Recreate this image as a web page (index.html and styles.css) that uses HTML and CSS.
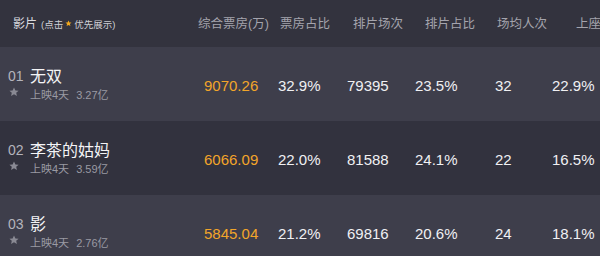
FILE: index.html
```html
<!DOCTYPE html>
<html lang="zh-CN">
<head>
<meta charset="utf-8">
<link rel="stylesheet" href="styles.css">
</head>
<body>
<div class="board">
  <div class="head">
    <div class="h-film"><span class="h-title">影片</span><span class="h-hint">(点击<svg class="h-star" viewBox="0 0 10 10"><path d="M5 0.6l1.3 2.8 3 .3-2.3 2 .7 3-2.7-1.6-2.7 1.6.7-3-2.3-2 3-.3z" fill="#f2a81d"/></svg>优先展示)</span></div>
    <div class="h-col h1">综合票房(万)</div>
    <div class="h-col h2">票房占比</div>
    <div class="h-col h3">排片场次</div>
    <div class="h-col h4">排片占比</div>
    <div class="h-col h5">场均人次</div>
    <div class="h-col h6">上座率</div>
  </div>

  <div class="row odd">
    <div class="film">
      <div class="rank"><span class="num">01</span><svg class="star" viewBox="0 0 10 10"><path d="M5 0.4l1.4 3 3.2.3-2.4 2.1.7 3.2L5 7.3 2.1 9l.7-3.2L.4 3.7l3.2-.3z" fill="#8a8a94"/></svg></div>
      <div class="info"><div class="name">无双</div><div class="meta">上映4天<span class="sum">3.27亿</span></div></div>
    </div>
    <div class="v c1 gold">9070.26</div>
    <div class="v c2">32.9%</div>
    <div class="v c3">79395</div>
    <div class="v c4">23.5%</div>
    <div class="v c5">32</div>
    <div class="v c6">22.9%</div>
  </div>

  <div class="row even">
    <div class="film">
      <div class="rank"><span class="num">02</span><svg class="star" viewBox="0 0 10 10"><path d="M5 0.4l1.4 3 3.2.3-2.4 2.1.7 3.2L5 7.3 2.1 9l.7-3.2L.4 3.7l3.2-.3z" fill="#8a8a94"/></svg></div>
      <div class="info"><div class="name">李茶的姑妈</div><div class="meta">上映4天<span class="sum">3.59亿</span></div></div>
    </div>
    <div class="v c1 gold">6066.09</div>
    <div class="v c2">22.0%</div>
    <div class="v c3">81588</div>
    <div class="v c4">24.1%</div>
    <div class="v c5">22</div>
    <div class="v c6">16.5%</div>
  </div>

  <div class="row odd">
    <div class="film">
      <div class="rank"><span class="num">03</span><svg class="star" viewBox="0 0 10 10"><path d="M5 0.4l1.4 3 3.2.3-2.4 2.1.7 3.2L5 7.3 2.1 9l.7-3.2L.4 3.7l3.2-.3z" fill="#8a8a94"/></svg></div>
      <div class="info"><div class="name">影</div><div class="meta">上映4天<span class="sum">2.76亿</span></div></div>
    </div>
    <div class="v c1 gold">5845.04</div>
    <div class="v c2">21.2%</div>
    <div class="v c3">69816</div>
    <div class="v c4">20.6%</div>
    <div class="v c5">24</div>
    <div class="v c6">18.1%</div>
  </div>
</div>
</body>
</html>
```

FILE: styles.css
```css
html, body {
  margin: 0;
  padding: 0;
  background: #3e3e4b;
}
body {
  width: 600px;
  height: 256px;
  overflow: hidden;
  font-family: "Liberation Sans", "Noto Sans CJK SC", sans-serif;
}
.board {
  width: 600px;
  height: 256px;
  overflow: hidden;
}
.head {
  display: flex;
  align-items: center;
  height: 47px;
  background: #33333e;
  white-space: nowrap;
}
.h-film {
  flex: none;
  width: 185px;
  padding-left: 13px;
  display: flex;
  align-items: center;
}
.h-title {
  font-size: 12px;
  color: #dcdce0;
  line-height: 14px;
}
.h-hint {
  margin-left: 4px;
  font-size: 9.5px;
  color: #cfcfd4;
  display: flex;
  align-items: center;
}
.h-star {
  width: 7px;
  height: 7px;
  margin: 0 2px;
}
.h-col {
  font-size: 12.5px;
  color: #a4a4ad;
  line-height: 14px;
  flex: none;
}
.h1 { width: 82px; }
.h2 { width: 73px; }
.h3 { width: 72px; }
.h4 { width: 72px; }
.h5 { width: 79px; }
.h6 { width: 40px; }

.row {
  display: flex;
  align-items: center;
  height: 74px;
  white-space: nowrap;
}
.odd { background: #3e3e4b; }
.even { background: #32323e; }

.film {
  width: 204px;
  padding-left: 8px;
  display: flex;
  align-items: flex-start;
  align-self: stretch;
  padding-top: 21px;
  box-sizing: border-box;
  flex: none;
}
.rank {
  width: 22px;
  display: flex;
  flex-direction: column;
  align-items: flex-start;
}
.num {
  font-size: 14px;
  line-height: 16px;
  color: #b4b4bc;
}
.star {
  width: 10px;
  height: 10px;
  margin-top: 3px;
  margin-left: 1px;
}
.info {
  display: flex;
  flex-direction: column;
}
.name {
  font-size: 16px;
  line-height: 18px;
  color: #f4f4f6;
}
.meta {
  margin-top: 2px;
  font-size: 11px;
  line-height: 14px;
  color: #9a9aa3;
}
.sum {
  margin-left: 7px;
}
.v {
  font-size: 15px;
  color: #f0f0f3;
  flex: none;
  padding-top: 2px;
}
.gold { color: #f2a52a; }
.c1 { width: 74px; }
.c2 { width: 69px; }
.c3 { width: 68px; }
.c4 { width: 80px; }
.c5 { width: 57px; }
.c6 { width: 48px; }
```
